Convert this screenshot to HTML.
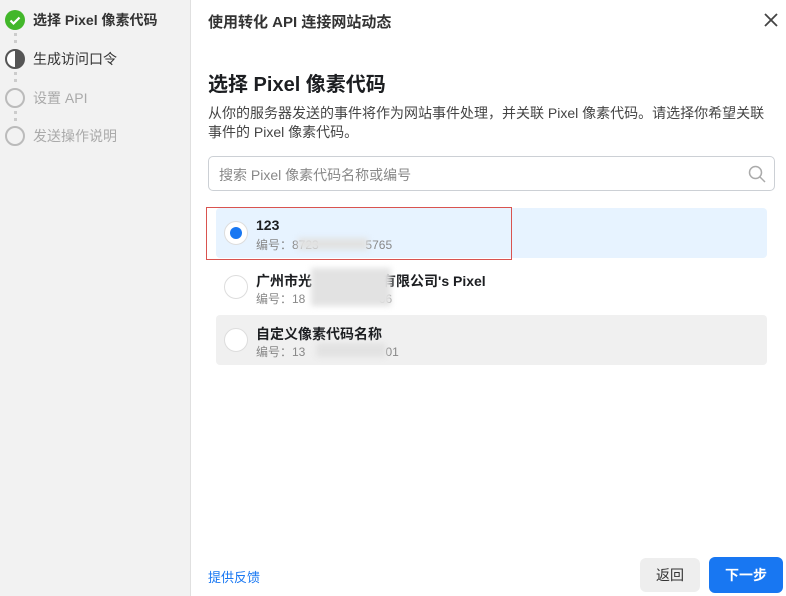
<!DOCTYPE html>
<html><head><meta charset="utf-8"><style>
*{margin:0;padding:0;box-sizing:border-box}
body{width:786px;height:596px;overflow:hidden;background:#fff;font-family:"Liberation Sans","Noto Sans CJK SC",sans-serif;position:relative;color:#1c1e21}
.side{position:absolute;left:0;top:0;width:191px;height:596px;background:#f2f2f2;border-right:1px solid #e0e0e0}
.step{position:absolute;left:5px;height:20px;display:flex;align-items:center;font-size:14px}
.step span{margin-left:8px}
.dot{position:absolute;left:14px;width:3px;height:3px;background:#ccc}
.abs{position:absolute}
.row{position:absolute;left:216px;width:551px;height:50px;border-radius:4px}
.radio{position:absolute;left:8px;top:13px;width:24px;height:24px;border-radius:50%;background:#fff;border:1px solid #ddd}
.nm{position:absolute;left:40px;top:9px;font-size:14px;font-weight:bold}
.id{position:absolute;left:40px;top:28px;font-size:12px;color:#888}
.blur{position:absolute;background:#e2e2e2;filter:blur(3px)}
</style></head><body>
<div class="side">
 <div class="step" style="top:10px"><svg width="20" height="20"><circle cx="10" cy="10" r="10" fill="#42b72a"/><path d="M5.5 10.5l3 3 6-6" stroke="#fff" stroke-width="2.2" fill="none"/></svg><span style="font-weight:bold;color:#333">选择 Pixel 像素代码</span></div>
 <div class="dot" style="top:33px"></div><div class="dot" style="top:40px"></div>
 <div class="step" style="top:49px"><svg width="20" height="20"><circle cx="10" cy="10" r="9" fill="#fff" stroke="#555" stroke-width="2"/><path d="M10 1a9 9 0 0 1 0 18z" fill="#555"/></svg><span style="color:#333">生成访问口令</span></div>
 <div class="dot" style="top:72px"></div><div class="dot" style="top:79px"></div>
 <div class="step" style="top:88px"><svg width="20" height="20"><circle cx="10" cy="10" r="9" fill="none" stroke="#bbb" stroke-width="2"/></svg><span style="color:#aaa">设置 API</span></div>
 <div class="dot" style="top:111px"></div><div class="dot" style="top:118px"></div>
 <div class="step" style="top:126px"><svg width="20" height="20"><circle cx="10" cy="10" r="9" fill="none" stroke="#bbb" stroke-width="2"/></svg><span style="color:#aaa">发送操作说明</span></div>
</div>
<div class="abs" style="left:208px;top:11px;font-size:15px;font-weight:bold;color:#333">使用转化 API 连接网站动态</div>
<svg class="abs" style="left:764px;top:13px" width="14" height="14"><path d="M1 1l12 12M13 1L1 13" stroke="#444" stroke-width="1.8"/></svg>
<div class="abs" style="left:208px;top:68px;font-size:20px;font-weight:bold">选择 Pixel 像素代码</div>
<div class="abs" style="left:208px;top:104px;width:570px;font-size:14px;line-height:19px;color:#444">从你的服务器发送的事件将作为网站事件处理，并关联 Pixel 像素代码。请选择你希望关联事件的 Pixel 像素代码。</div>
<div class="abs" style="left:208px;top:156px;width:567px;height:35px;border:1px solid #ccd0d5;border-radius:5px;font-size:14px;color:#888;padding:8px 10px">搜索 Pixel 像素代码名称或编号
 <svg class="abs" style="right:8px;top:8px" width="18" height="18"><circle cx="7.5" cy="7.5" r="6" fill="none" stroke="#aaa" stroke-width="1.5"/><path d="M12 12l5 5" stroke="#aaa" stroke-width="1.5"/></svg></div>
<div class="row" style="top:208px;background:#e7f3ff"><div class="radio"><div style="position:absolute;left:5px;top:5px;width:12px;height:12px;border-radius:50%;background:#1877f2"></div></div><div class="nm">123</div><div class="id">编号：8723<span style="color:transparent">0000000</span>5765</div><div class="blur" style="left:82px;top:30px;width:70px;height:12px"></div></div>
<div class="abs" style="left:206px;top:207px;width:306px;height:53px;border:1px solid #d9534f"></div>
<div class="row" style="top:262px"><div class="radio"></div><div class="nm">广州市光<span style="color:transparent">某某某某某</span>有限公司's Pixel</div><div class="id">编号：18<span style="color:transparent">00000000000</span>66</div><div class="blur" style="left:95px;top:6px;width:80px;height:38px"></div></div>
<div class="row" style="top:315px;background:#f0f0f0"><div class="radio"></div><div class="nm">自定义像素代码名称</div><div class="id">编号：13<span style="color:transparent">000000000000</span>01</div><div class="blur" style="left:100px;top:28px;width:70px;height:14px"></div></div>
<div class="abs" style="left:208px;top:567px;font-size:13px;color:#1877f2">提供反馈</div>
<div class="abs" style="left:640px;top:558px;width:60px;height:34px;background:#eee;border-radius:6px;font-size:14px;text-align:center;line-height:34px;color:#333">返回</div>
<div class="abs" style="left:709px;top:557px;width:74px;height:36px;background:#1877f2;border-radius:6px;font-size:14px;font-weight:bold;text-align:center;line-height:36px;color:#fff">下一步</div>
</body></html>
